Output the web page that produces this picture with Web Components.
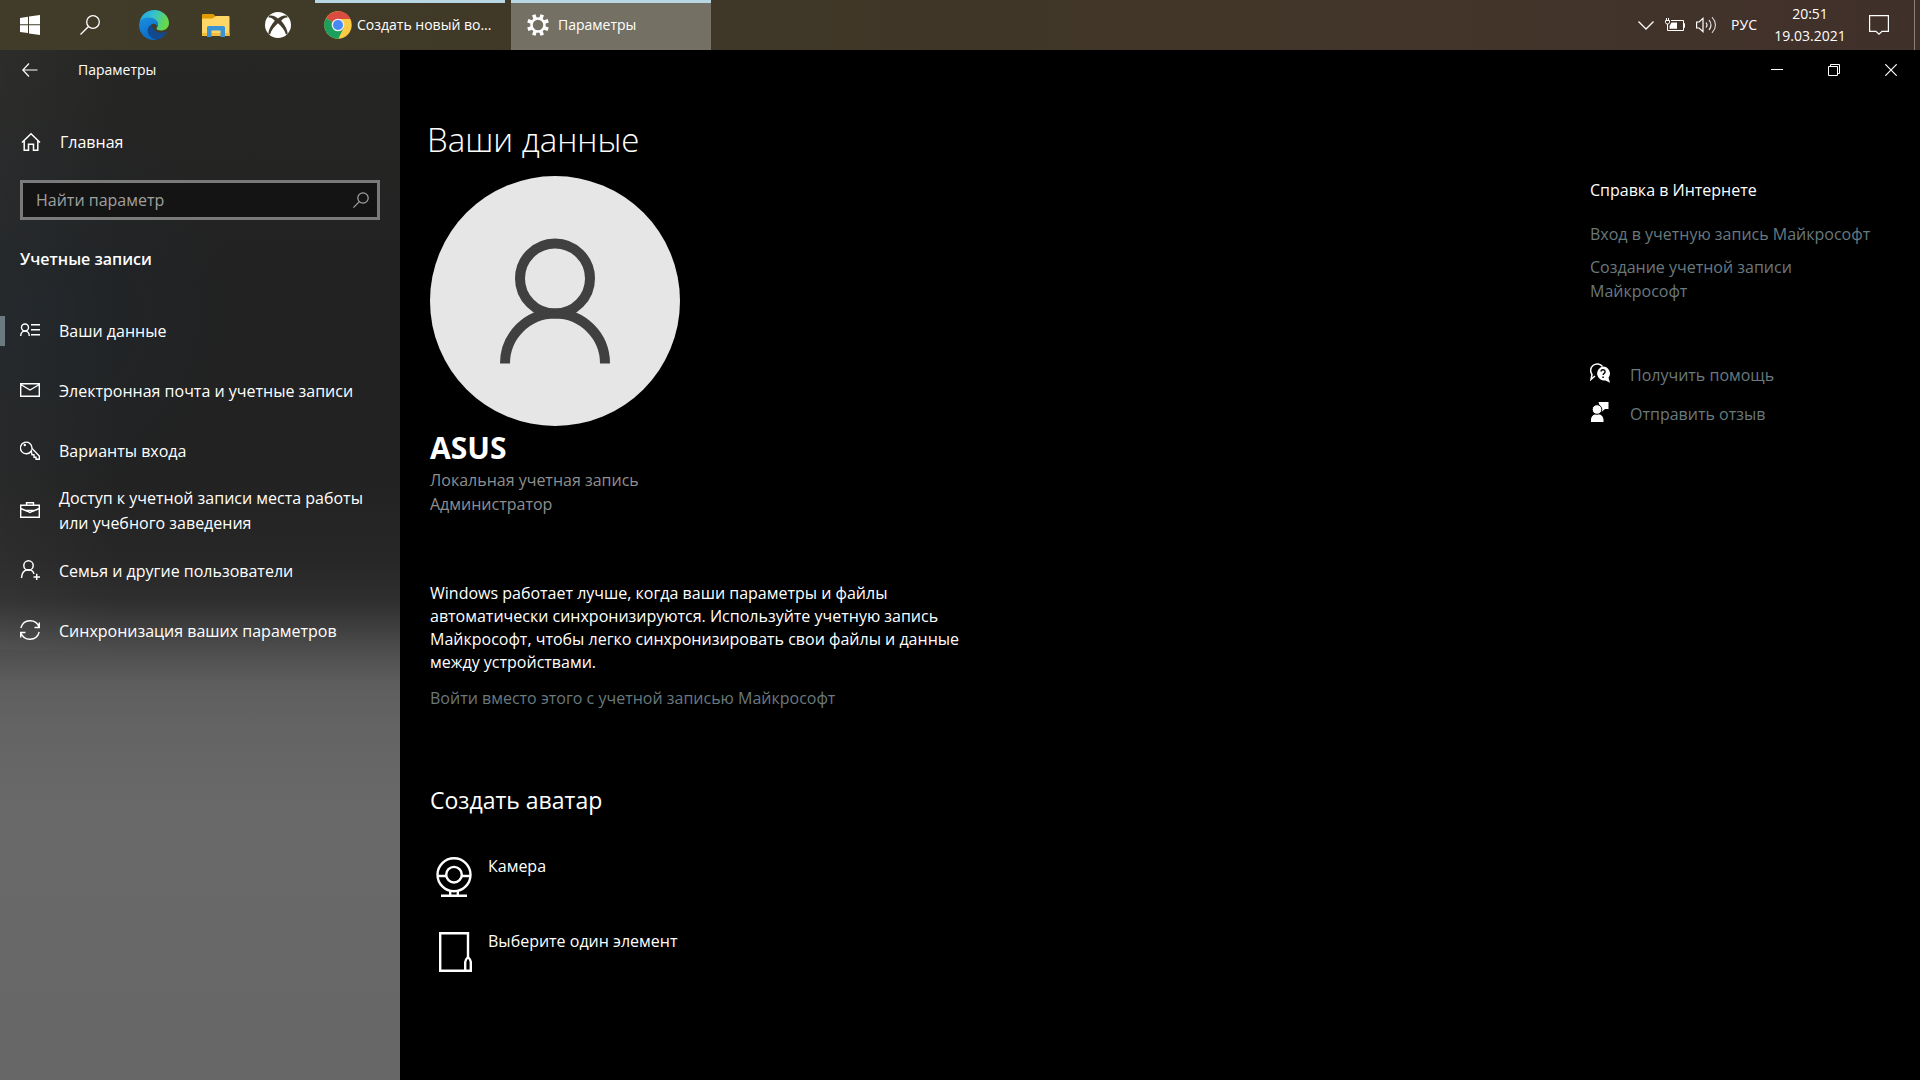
<!DOCTYPE html>
<html lang="ru">
<head>
<meta charset="utf-8">
<title>Параметры</title>
<style>
html, body { height: 100%; }
body { margin: 0; background: #000; color: #fff; font: 16px/24px "Open Sans", "Noto Sans", sans-serif; overflow: hidden; }
desktop-shell { --link: #69797e; --muted: #8f8f8f; --small: 14px; }
</style>
</head>
<body>
<desktop-shell></desktop-shell>

<script>
const ICONS = {
  start: [20, 20, '<path fill="#fff" d="M0 3 8 1.800V9.300H0zM9 1.600 20 0V9.300H9zM0 10.300H8V18L0 17zM9 10.300H20V20L9 18.400z"/>'],
  search: [20, 20, '<g fill="none" stroke="#fff" stroke-width="1.300"><circle cx="13" cy="7" r="6.300"/><path d="M8.500 11.500.5 19.500"/></g>'],
  edge: [30, 30, '<defs><linearGradient id="a" x1="0" y1="0" x2="1" y2=".3"><stop offset="0" stop-color="#1f9fe0"/><stop offset=".5" stop-color="#35c1d0"/><stop offset="1" stop-color="#66d84a"/></linearGradient><linearGradient id="b" x1="0" y1="0" x2=".4" y2="1"><stop offset="0" stop-color="#1b8fdf"/><stop offset="1" stop-color="#0a6cc8"/></linearGradient></defs><path fill="url(#a)" d="M.5 13C1.500 5 8 0 15 0c9 0 15 6.500 15 13 0 5-4 7.500-8 7.500-3.500 0-5-1.500-4.500-2.500 1-1 1.500-1.800 1.500-3.500 0-3.500-4-6.500-9-6.500C5 8 1.500 10.500.5 13z"/><path fill="url(#b)" d="M.2 14C.8 9.500 5 7.500 9.500 7.500c5.500 0 9.500 3 9.500 7 0 1-.3 2-1 2.800.2-3-3-4.300-5-3-3.500 2-4.500 7 0 12 1.500 1.800 3.500 3 5 3.400-1 .3-2 .3-3 .3C6 30-.6 22.500.2 14z"/><path fill="#114a8e" d="M13 14.300c-6 2.700-6 9.700.5 14 3 2 5.500 1.500 8 .2 2.500-1.200 5-3.500 6.300-6 .4-.8-.3-1.200-1-.8-3 1.600-7.300 1.600-10-.4-3-2.200-4.300-4.500-3.800-7z"/>'],
  explorer: [28, 23, '<path fill="#e09b00" d="M0 1q0-1 1-1h10l3 2.500v3H0z"/><path fill="#ffd766" d="M0 4.500h10.500L14 2h12.500q1 0 1 1v19h-27.500z"/><path fill="#f6bd3c" d="M0 19h27.500v3H0z"/><path fill="#3a93d4" d="M5 23V13.500q0-1.500 1.500-1.500h15q1.500 0 1.500 1.500V23h-4.500v-6.500h-9V23z"/>'],
  xbox: [26, 26, '<circle cx="13" cy="13" r="13" fill="#fff"/><path d="M4 3.800C8 3 11 5 13 6.500 15 5 18 3 22 3.800L22.600 5.500C20 5 18 6.700 16.200 8.700 20 13 22.300 17.500 22.700 21.500L21 22.800C20 18.500 16.500 14.300 13 11.300 9.500 14.300 6 18.500 5 22.800L3.300 21.500C3.700 17.500 6 13 9.800 8.700 8 6.700 6 5 3.400 5.500z" fill="#413c2b"/>'],
  chrome: [28, 28, '<circle cx="14" cy="14" r="13.700" fill="#fbcb43"/><path fill="#da4b40" d="M14 14 2.100 7.200A13.700 13.700 0 0 1 26 8H14z"/><path fill="#da4b40" d="M14 .3A13.700 13.700 0 0 1 26.300 8H14z"/><path fill="#1b9f5d" d="M2.100 7.200A13.700 13.700 0 0 0 14.300 27.700L19.500 17z"/><circle cx="14" cy="14" r="6.300" fill="#eee"/><circle cx="14" cy="14" r="5" fill="#4688f4"/>'],
  gear: [22, 22, '<circle cx="11" cy="11" r="6.500" fill="none" stroke="#fff" stroke-width="2.500"/><g stroke="#fff" stroke-width="3.600"><path d="M8 4.500 6.800.8M14 4.500 15.200.8M8 17.500 6.800 21.200M14 17.500 15.200 21.200M4.500 8 .8 6.800M4.500 14 .8 15.200M17.500 8 21.200 6.800M17.500 14 21.200 15.200"/></g>'],
  chevron: [16, 9, '<path d="M.5.5 8 8 15.500.5" fill="none" stroke="#fff" stroke-width="1.300"/>'],
  battery: [20, 14, '<path fill="none" stroke="#fff" d="M6 2.500H18.500V12.500H2.500V6M18.500 5.500h1v4h-1M1.500 0v2M3.500 0v2M.5 2.500h4v2l-1 1.500h-2L.5 4.500z"/><path fill="#fff" d="M4.500 8 6.500 4.500H12v6.200H4.500z"/>'],
  volume: [21, 18, '<g fill="none" stroke="#fff" stroke-width="1.200"><path d="M.6 6h2.500L7 2.300v13.400L3.100 12H.6z"/><path d="M10 6.500q2 2.500 0 5M13 4q4 5 0 10" opacity=".9"/><path d="M16 1.200q7 7.800 0 15.600" opacity=".75"/></g>'],
  notify: [20, 20, '<path d="M.6.6H19.400V16.400H13L10 19.200 7 16.400H.6z" fill="none" stroke="#fff" stroke-width="1.200"/>'],
  back: [16, 14, '<path d="M7 .5.8 7 7 13.500M.8 7H15.500" fill="none" stroke="#fff" stroke-width="1.200"/>'],
  min: [12, 12, '<path d="M0 5.500H12" stroke="#fff"/>'],
  restore: [12, 12, '<path d="M.5 2.500h9v9h-9zM2.500 2.500v-2h9v9h-2" fill="none" stroke="#fff"/>'],
  close: [12, 12, '<path d="M.3.3 11.700 11.700M11.700.3.300 11.700" stroke="#fff" stroke-width="1.200"/>'],
  home: [20, 20, '<path d="M1 10.500 10 1.800l9 8.700M3.200 9v9.200h4.300v-6h5v6h4.300V9" fill="none" stroke="#fff" stroke-width="1.500"/>'],
  find: [16, 16, '<g fill="none" stroke="#a5a5a5" stroke-width="1.200"><circle cx="10" cy="6" r="5.200"/><path d="M6.300 9.700.4 15.600"/></g>'],
  person: [20, 14, '<g fill="none" stroke="#fff" stroke-width="1.400"><circle cx="5" cy="4.500" r="3.500"/><path d="M.7 13C1 6.500 9 6.500 9.300 13M11 1.700h9M11 6.700h9M11 11.700h9"/></g>'],
  mail: [20, 14, '<path d="M.7.7H19.300V13.300H.7zM.7 1.500 10 7l9.300-5.500" fill="none" stroke="#fff" stroke-width="1.400"/>'],
  key: [20, 20, '<path d="M11.300 10.800A5.800 5.800 0 1 1 12 8.500L19.300 16v3.300H16v-2h-2v-2.500h-2z" fill="none" stroke="#fff" stroke-width="1.400"/><circle cx="4.800" cy="5" r="1.200" fill="#fff"/>'],
  briefcase: [20, 16, '<path d="M.7 3.200H19.300V15.300H.7zM6.500 3V.7h7V3M.7 6.500 8 9.500M12 9.500 19.300 6.500M7.500 8.500q2.500 4 5 0z" fill="none" stroke="#fff" stroke-width="1.400"/>'],
  family: [20, 20, '<g fill="none" stroke="#fff" stroke-width="1.500"><circle cx="8.500" cy="5.500" r="4.700"/><path d="M1.500 18c.5-10 11-10.500 12.500-4M13.500 17h6.500M16.700 13.800v6.400"/></g>'],
  sync: [20, 20, '<path d="M.8 8C3.500-1.500 16-1.500 19 7M19.300 2.500V7.500H14.500M19.200 12C16.500 21.500 4 21.500 1 13M.7 17.500V12.500H5.500" fill="none" stroke="#fff" stroke-width="1.400"/>'],
  avatar: [250, 250, '<circle cx="125" cy="125" r="125" fill="#e6e6e6"/><g fill="none" stroke="#404040" stroke-width="10"><circle cx="125" cy="102.500" r="35"/><path d="M75 187.500a50 50 0 0 1 100 0"/></g>'],
  camera: [36, 40, '<g fill="none" stroke="#fff" stroke-width="2.400"><circle cx="18" cy="17.700" r="16.500"/><circle cx="18" cy="17.700" r="7.800"/><path d="M1.500 19h8.700M25.800 19h8.700M14.200 34v4M21.800 34v4M5 38.700h26"/></g>'],
  browse: [33, 40, '<path d="M25 38.700H1.200V1.200h27.800V25M29 25q3 3 2.800 5.500V38.700H26.200V30.500Q26 28 29 25z" fill="none" stroke="#fff" stroke-width="2.400"/>'],
  help: [20, 20, '<path d="M5 13 1 16.500 2 11.500A6.500 6.500 0 1 1 12.500 3.500" fill="none" stroke="#fff" stroke-width="1.500"/><path fill="#fff" d="M13 3.500a7 7 0 0 1 5.500 11.200l1.500 5-4.500-2.200A7 7 0 1 1 13 3.500z"/><path d="M10.800 8.500q.5-1.800 2.300-1.700 2 .2 2 1.900 0 1.200-1.200 1.800-.8.500-.8 1.600" fill="none" stroke="#000" stroke-width="1.400"/><path d="M12.300 13.500h1.500v1.600h-1.500z"/>'],
  feedback: [20, 20, '<path fill="#fff" d="M8.500 0H18.500V7h-3.500l-3.500 3zM1 20v-2c0-8 12.500-8 12.500 0v2z"/><circle cx="7" cy="7.500" r="4.800" fill="#fff" stroke="#000"/>']
};

function define(name, html) {
  const t = document.createElement('template');
  t.innerHTML = html;
  customElements.define(name, class extends HTMLElement {
    constructor() {
      super();
      this.attachShadow({ mode: 'open' }).append(t.content.cloneNode(true));
    }
  });
}

customElements.define('win-icon', class extends HTMLElement {
  connectedCallback() {
    if (this.shadowRoot) return;
    const [w, h, body] = ICONS[this.getAttribute('name')];
    this.attachShadow({ mode: 'open' }).innerHTML =
      `<style>:host{display:block;flex:none}svg{display:block}</style>
       <svg width="${w}" height="${h}" viewBox="0 0 ${w} ${h}" aria-hidden="true">${body}</svg>`;
  }
});

define('task-button', `
<style>
:host { display: block; width: 62px; height: 50px; }
button { all: unset; box-sizing: border-box; width: 100%; height: 100%; display: flex; align-items: center; justify-content: center; }
:host([wide]) button { justify-content: flex-start; gap: 5px; padding: 0 9px; border-top: 3px solid #b9d7e2; padding-bottom: 3px; }
:host([wide]) { width: 190px; font-size: var(--small); }
:host([active]) { width: 200px; background: #747064; margin-left: 6px; }
:host([active]) button { gap: 9px; padding-left: 16px; }
span { white-space: nowrap; overflow: hidden; text-overflow: ellipsis; }
</style>
<button><slot name="icon"></slot><span><slot></slot></span></button>`);

define('win-taskbar', `
<style>
:host { display: flex; height: 50px; background: linear-gradient(90deg, #413c2a 0%, #3f3727 40%, #43352a 75%, #40302a 100%); }
.sys { width: 60px; }
.gap { margin-right: 3px; }
.end { margin-right: 6px; }
.tray { margin-left: auto; display: flex; align-items: center; gap: 11px; font-size: var(--small); line-height: 22px; }
.clock { text-align: center; width: 74px; margin: 0 11px 0 5px; }
.peek { width: 6px; height: 50px; box-sizing: border-box; border-left: 1px solid #8b8079; margin-left: 14px; }
button { all: unset; display: block; }
.lang { margin-left: 3px; }
</style>
<task-button class="sys"><win-icon slot="icon" name="start"></win-icon></task-button>
<task-button class="sys gap"><win-icon slot="icon" name="search"></win-icon></task-button>
<task-button><win-icon slot="icon" name="edge"></win-icon></task-button>
<task-button><win-icon slot="icon" name="explorer"></win-icon></task-button>
<task-button class="end"><win-icon slot="icon" name="xbox"></win-icon></task-button>
<task-button wide><win-icon slot="icon" name="chrome"></win-icon>Создать новый во...</task-button>
<task-button wide active><win-icon slot="icon" name="gear"></win-icon>Параметры</task-button>
<div class="tray">
  <button><win-icon name="chevron"></win-icon></button>
  <button><win-icon name="battery"></win-icon></button>
  <button><win-icon name="volume"></win-icon></button>
  <button class="lang">РУС</button>
  <button class="clock">20:51<br>19.03.2021</button>
  <button><win-icon name="notify"></win-icon></button>
  <div class="peek"></div>
</div>`);

define('nav-item', `
<style>
:host { display: block; }
a { display: flex; align-items: center; gap: 19px; height: 60px; padding-left: 20px; color: #fff; text-decoration: none; line-height: 25px; }
:host([current]) a { background: linear-gradient(#6c7b80, #6c7b80) 0 50% / 5px 30px no-repeat; }
::slotted(win-icon) { margin-bottom: 2px; }
</style>
<a href="#"><slot name="icon"></slot><span><slot></slot></span></a>`);

define('settings-sidebar', `
<style>
:host { display: flex; flex-direction: column; box-sizing: border-box; width: 400px; flex: none;
  background:
    radial-gradient(ellipse 200px 200px at 40px 260px, #1f2a3366, #1f2a3300),
    linear-gradient(90deg, #ffffff08, #ffffff00 30%) 0 0 / 100% 600px no-repeat,
    linear-gradient(#262625 0, #222 230px, #222 430px, #272727 510px, #2e2e2e 550px, #404040 580px, #505050 605px, #5e5e5e 635px, #646464 680px, #696969 760px, #676767 100%); }
header { display: flex; align-items: center; height: 40px; gap: 40px; padding-left: 22px; font-size: var(--small); }
button { all: unset; }
.home { display: flex; align-items: center; gap: 19px; height: 40px; margin-top: 32px; padding-left: 21px; color: #fff; text-decoration: none; }
.search { display: flex; align-items: center; box-sizing: border-box; height: 40px; margin: 18px 20px 0; padding: 0 8px 0 13px; border: 3px solid #7a7a7a; background: #141414; }
input { all: unset; flex: 1; min-width: 0; font: inherit; }
input::placeholder { color: #a0a0a0; opacity: 1; }
h2 { margin: 27px 0 30px 20px; font-size: 16px; font-weight: 600; line-height: 24px; }
</style>
<header><button aria-label="Назад"><win-icon name="back"></win-icon></button><span>Параметры</span></header>
<a class="home" href="#"><win-icon name="home"></win-icon>Главная</a>
<label class="search"><input type="text" placeholder="Найти параметр" aria-label="Найти параметр"><win-icon name="find"></win-icon></label>
<h2>Учетные записи</h2>
<nav>
  <nav-item current><win-icon slot="icon" name="person"></win-icon>Ваши данные</nav-item>
  <nav-item><win-icon slot="icon" name="mail"></win-icon>Электронная почта и учетные записи</nav-item>
  <nav-item><win-icon slot="icon" name="key"></win-icon>Варианты входа</nav-item>
  <nav-item><win-icon slot="icon" name="briefcase"></win-icon>Доступ к учетной записи места работы<br>или учебного заведения</nav-item>
  <nav-item><win-icon slot="icon" name="family"></win-icon>Семья и другие пользователи</nav-item>
  <nav-item><win-icon slot="icon" name="sync"></win-icon>Синхронизация ваших параметров</nav-item>
</nav>`);

define('window-controls', `
<style>
:host { display: flex; justify-content: flex-end; height: 40px; padding-right: 1px; }
button { all: unset; width: 57px; display: flex; align-items: center; justify-content: center; }
</style>
<button aria-label="Свернуть"><win-icon name="min"></win-icon></button>
<button aria-label="Свернуть в окно"><win-icon name="restore"></win-icon></button>
<button aria-label="Закрыть"><win-icon name="close"></win-icon></button>`);

define('avatar-option', `
<style>
:host { display: block; height: 75px; }
button { all: unset; display: flex; align-items: flex-start; }
.pic { width: 58px; box-sizing: border-box; display: flex; justify-content: flex-end; padding: 3px 16px 0 0; }
</style>
<button><span class="pic"><slot name="icon"></slot></span><span><slot></slot></span></button>`);

define('account-page', `
<style>
:host { display: block; padding-left: 30px; }
h1 { margin: 26px 0 12px -3px; font-size: 33px; font-weight: 300; line-height: 48px; }
h2 { margin: 3px 0 1px; font-size: 30px; font-weight: 700; line-height: 38px; }
.muted { color: var(--muted); margin: 0; }
.info { margin: 66px 0 12px; line-height: 23px; }
a { color: var(--link); text-decoration: none; }
h3 { margin: 74px 0 38px; font-size: 23px; font-weight: 400; line-height: 32px; }
</style>
<h1>Ваши данные</h1>
<win-icon name="avatar"></win-icon>
<h2>ASUS</h2>
<p class="muted">Локальная учетная запись<br>Администратор</p>
<p class="info">Windows работает лучше, когда ваши параметры и файлы<br>автоматически синхронизируются. Используйте учетную запись<br>Майкрософт, чтобы легко синхронизировать свои файлы и данные<br>между устройствами.</p>
<a href="#">Войти вместо этого с учетной записью Майкрософт</a>
<h3>Создать аватар</h3>
<avatar-option><win-icon slot="icon" name="camera"></win-icon>Камера</avatar-option>
<avatar-option><win-icon slot="icon" name="browse"></win-icon>Выберите один элемент</avatar-option>`);

define('help-pane', `
<style>
:host { display: block; width: 330px; flex: none; padding-top: 88px; }
h2 { margin: 0 0 20px; font-size: 16px; font-weight: 400; line-height: 24px; }
a { display: block; color: var(--link); text-decoration: none; }
a + a { margin-top: 9px; }
.act { display: flex; align-items: center; gap: 20px; height: 24px; }
.act win-icon { margin-bottom: 4px; }
.act + .act { margin-top: 15px; }
.acts { margin-top: 60px; }
</style>
<h2>Справка в Интернете</h2>
<a href="#">Вход в учетную запись Майкрософт</a>
<a href="#">Создание учетной записи<br>Майкрософт</a>
<div class="acts">
<a class="act" href="#"><win-icon name="help"></win-icon>Получить помощь</a>
<a class="act" href="#"><win-icon name="feedback"></win-icon>Отправить отзыв</a>
</div>`);

define('desktop-shell', `
<style>
:host { display: flex; flex-direction: column; height: 100%; }
.window { flex: 1; min-height: 0; display: flex; }
main { flex: 1; min-width: 0; background: #000; }
.cols { display: flex; }
account-page { flex: 1; min-width: 0; }
</style>
<win-taskbar></win-taskbar>
<div class="window">
  <settings-sidebar></settings-sidebar>
  <main>
    <window-controls></window-controls>
    <div class="cols"><account-page></account-page><help-pane></help-pane></div>
  </main>
</div>`);
</script>
</body>
</html>
